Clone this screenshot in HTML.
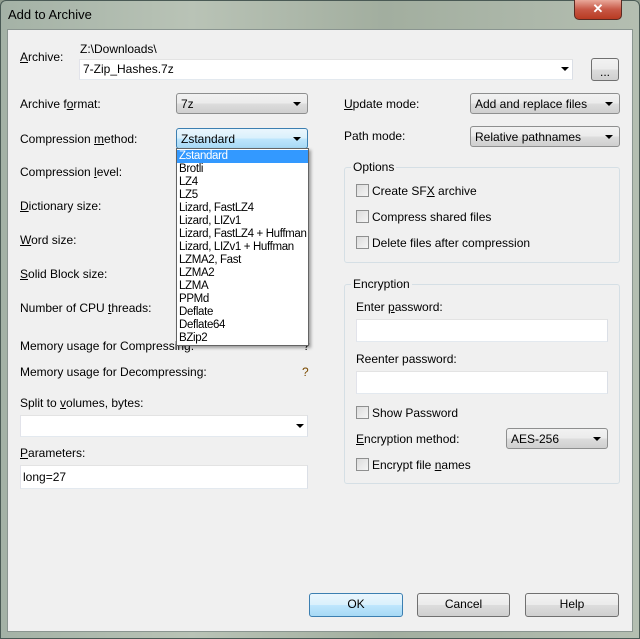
<!DOCTYPE html>
<html><head><style>
*{box-sizing:border-box;margin:0;padding:0}
body{width:640px;height:639px;overflow:hidden;background:#8f9c8e;font-family:"Liberation Sans",sans-serif;font-size:12px;color:#000;position:relative}
.frame{position:absolute;left:0;top:0;width:640px;height:639px;border:1px solid #4a5a55;border-radius:6px 6px 0 0;background:linear-gradient(90deg,#a4b2a6,#b9c3b6 30%,#a2ae9f 60%,#b4beb1);}
.title{position:absolute;left:8px;top:7px;font-size:13px;color:#000}
.close{position:absolute;left:574px;top:0;width:48px;height:20px;border:1px solid #5a2a22;border-top:none;border-radius:0 0 5px 5px;background:linear-gradient(#e9a99b,#c75745 50%,#b83a22);color:#fff;font-weight:bold;text-align:center;font-size:13px;line-height:18px}
.client{position:absolute;left:7px;top:29px;width:626px;height:603px;background:#f0f0f0;border:1px solid #8a9590}
.a{position:absolute;white-space:nowrap}
.combo{position:absolute;border:1px solid #8e8f8f;border-radius:3px;background:linear-gradient(#f2f2f2,#ebebeb 50%,#dddddd 51%,#cfcfcf);padding:3px 0 0 4px;height:21px;white-space:nowrap}
.combo:after{content:"";position:absolute;right:6px;top:8px;border-left:4px solid transparent;border-right:4px solid transparent;border-top:4px solid #000}
.edit{position:absolute;background:#fff;border:1px solid #abadb3;border-top-color:#e3e3e3;border-left-color:#e2e3ea;border-bottom-color:#e3e9ef;border-right-color:#dbdfe6}
.cb{position:absolute;width:13px;height:13px;border:1px solid #8e8f8f;background:linear-gradient(135deg,#dcdcdc,#f5f5f5)}
.grp{position:absolute;border:1px solid #d5dfe5;border-radius:3px}
.leg{position:absolute;background:#f0f0f0;padding:0 2px}
.btn{position:absolute;border:1px solid #707070;border-radius:3px;background:linear-gradient(#f2f2f2,#ebebeb 50%,#dddddd 51%,#cfcfcf);text-align:center;line-height:21px}
.list{position:absolute;left:176px;top:148px;width:133px;height:198px;background:#fff;border:1px solid #646464;box-shadow:2px 2px 3px rgba(0,0,0,.35);overflow:hidden}
.list div{height:13px;line-height:13px;padding-left:2px;font-size:11.5px;white-space:nowrap;letter-spacing:-0.35px}
u{text-decoration:underline}
</style></head><body>
<div class="frame"></div>
<div class="title">Add to Archive</div>
<div class="close">✕</div>
<div class="client"></div>

<div class="a" style="left:20px;top:50px"><u>A</u>rchive:</div>
<div class="a" style="left:80px;top:42px">Z:\Downloads\</div>
<div class="edit" style="left:79px;top:59px;width:494px;height:21px"></div>
<div class="a" style="left:83px;top:62px">7-Zip_Hashes.7z</div>
<div class="a" style="left:561px;top:67px;border-left:4px solid transparent;border-right:4px solid transparent;border-top:4px solid #000"></div>
<div class="btn" style="left:591px;top:58px;width:28px;height:23px;line-height:26px">...</div>

<div class="a" style="left:20px;top:97px">Archive f<u>o</u>rmat:</div>
<div class="combo" style="left:176px;top:93px;width:132px">7z</div>
<div class="a" style="left:20px;top:132px">Compression <u>m</u>ethod:</div>
<div class="combo" style="left:176px;top:128px;width:132px;border-color:#3c7fb1;background:linear-gradient(#eaf6fd,#d9f0fc 50%,#bee6fd 51%,#a7d9f5)">Zstandard</div>
<div class="a" style="left:20px;top:165px">Compression <u>l</u>evel:</div>
<div class="a" style="left:20px;top:199px"><u>D</u>ictionary size:</div>
<div class="a" style="left:20px;top:233px"><u>W</u>ord size:</div>
<div class="a" style="left:20px;top:267px"><u>S</u>olid Block size:</div>
<div class="a" style="left:20px;top:301px">Number of CPU <u>t</u>hreads:</div>
<div class="a" style="left:20px;top:339px">Memory usage for Compressing:</div>
<div class="a" style="left:303px;top:339px">?</div>
<div class="a" style="left:20px;top:365px">Memory usage for Decompressing:</div>
<div class="a" style="left:302px;top:365px;color:#7a4a00">?</div>
<div class="a" style="left:20px;top:396px">Split to <u>v</u>olumes, bytes:</div>
<div class="edit" style="left:20px;top:415px;width:288px;height:22px"></div>
<div class="a" style="left:296px;top:424px;border-left:4px solid transparent;border-right:4px solid transparent;border-top:4px solid #000"></div>
<div class="a" style="left:20px;top:446px"><u>P</u>arameters:</div>
<div class="edit" style="left:20px;top:465px;width:288px;height:24px"></div>
<div class="a" style="left:23px;top:470px">long=27</div>

<div class="list">
<div style="background:#3399ff;color:#fff;margin-top:1px">Zstandard</div>
<div>Brotli</div><div>LZ4</div><div>LZ5</div><div>Lizard, FastLZ4</div><div>Lizard, LIZv1</div><div>Lizard, FastLZ4 + Huffman</div><div>Lizard, LIZv1 + Huffman</div><div>LZMA2, Fast</div><div>LZMA2</div><div>LZMA</div><div>PPMd</div><div>Deflate</div><div>Deflate64</div><div>BZip2</div>
</div>

<div class="a" style="left:344px;top:97px"><u>U</u>pdate mode:</div>
<div class="combo" style="left:470px;top:93px;width:150px">Add and replace files</div>
<div class="a" style="left:344px;top:129px">Path mode:</div>
<div class="combo" style="left:470px;top:126px;width:150px">Relative pathnames</div>

<div class="grp" style="left:344px;top:167px;width:276px;height:96px"></div>
<div class="leg" style="left:351px;top:160px">Options</div>
<div class="cb" style="left:356px;top:184px"></div><div class="a" style="left:372px;top:184px">Create SF<u>X</u> archive</div>
<div class="cb" style="left:356px;top:210px"></div><div class="a" style="left:372px;top:210px">Compress shared files</div>
<div class="cb" style="left:356px;top:236px"></div><div class="a" style="left:372px;top:236px">Delete files after compression</div>

<div class="grp" style="left:344px;top:284px;width:276px;height:200px"></div>
<div class="leg" style="left:351px;top:277px">Encryption</div>
<div class="a" style="left:356px;top:300px">Enter <u>p</u>assword:</div>
<div class="edit" style="left:356px;top:319px;width:252px;height:23px"></div>
<div class="a" style="left:356px;top:352px">Reenter password:</div>
<div class="edit" style="left:356px;top:371px;width:252px;height:23px"></div>
<div class="cb" style="left:356px;top:406px"></div><div class="a" style="left:372px;top:406px">Show Password</div>
<div class="a" style="left:356px;top:432px"><u>E</u>ncryption method:</div>
<div class="combo" style="left:506px;top:428px;width:102px">AES-256</div>
<div class="cb" style="left:356px;top:458px"></div><div class="a" style="left:372px;top:458px">Encrypt file <u>n</u>ames</div>

<div class="btn" style="left:309px;top:593px;width:94px;height:24px;border-color:#3c7fb1;background:linear-gradient(#eaf6fd,#d9f0fc 50%,#bee6fd 51%,#a7d9f5)">OK</div>
<div class="btn" style="left:417px;top:593px;width:93px;height:24px">Cancel</div>
<div class="btn" style="left:525px;top:593px;width:94px;height:24px">Help</div>
</body></html>
